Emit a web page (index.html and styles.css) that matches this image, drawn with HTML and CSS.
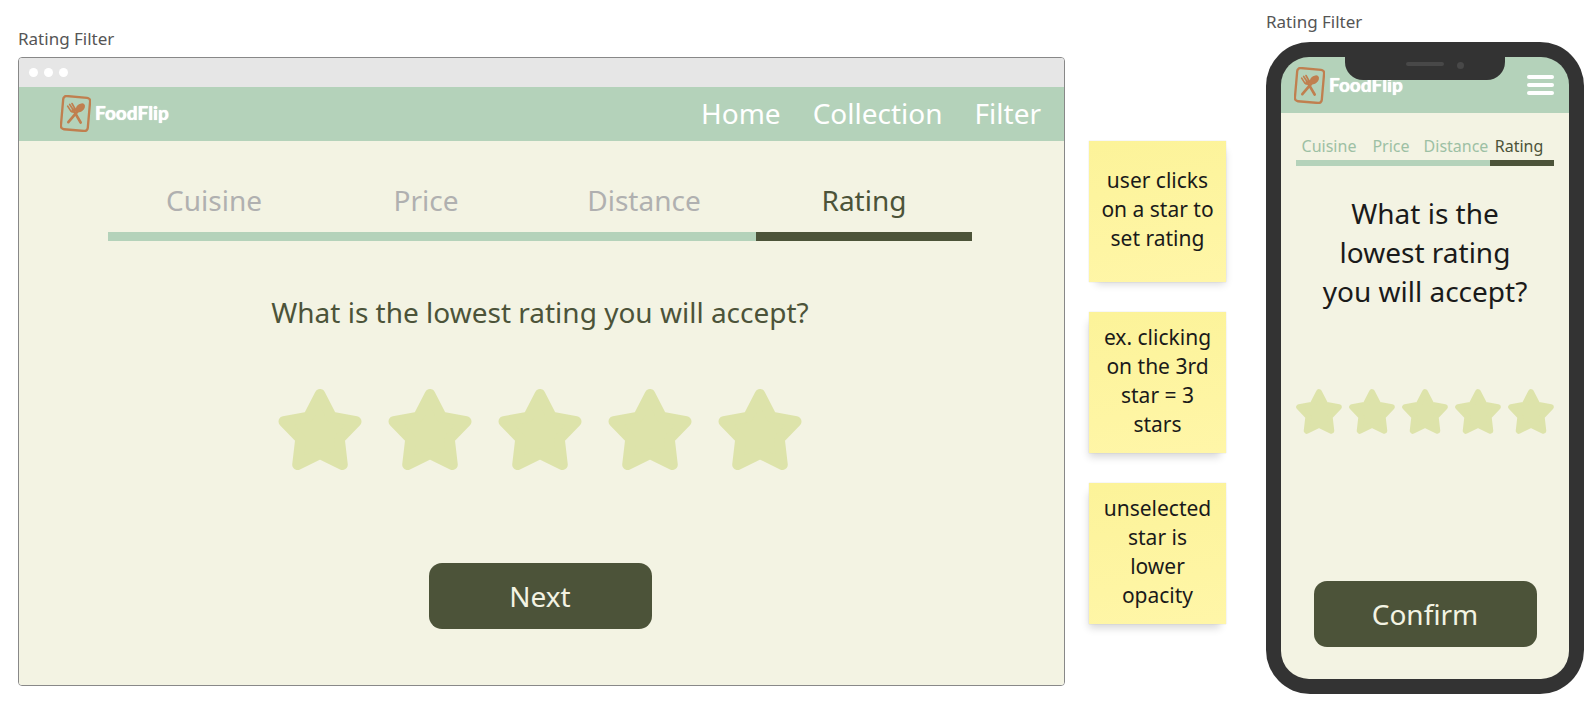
FILE: index.html
```html
<!DOCTYPE html>
<html lang="en">
<head>
<meta charset="utf-8">
<title>Rating Filter</title>
<link rel="stylesheet" href="styles.css">
</head>
<body>
<svg class="defs" aria-hidden="true">
  <symbol id="star" viewBox="0 0 250 242">
    <path d="M125 16 160 84 233 97 183 149 192 226 125 193 58 226 67 149 17 97 90 84Z" fill="currentColor" stroke="currentColor" stroke-width="32" stroke-linejoin="round"/>
  </symbol>
  <symbol id="logo" viewBox="0 0 93 110">
    <g fill="none" stroke="currentColor" stroke-linecap="round">
      <rect x="6" y="5" width="81" height="100" rx="10" stroke-width="7" transform="rotate(5 46 55)"/>
      <path d="M42 48 62 82" stroke-width="8"/>
      <path d="M25 81 54 47" stroke-width="8"/>
      <path d="M23 33 32 47Q38 53 44 47Q48 43 44 39L36 25M29 28 39 43" stroke-width="5"/>
    </g>
    <path d="M34 44 44 38 48 45Q46 52 38 52Z" fill="currentColor"/>
    <ellipse cx="61" cy="38" rx="16" ry="11" transform="rotate(-42 61 38)" fill="currentColor"/>
  </symbol>
</svg>

<main class="board">
  <section class="desktop">
    <h2 class="frame-label">Rating Filter</h2>
    <div class="browser">
      <div class="browser-bar"><i></i><i></i><i></i></div>
      <header class="site-header">
        <a class="brand" href="#"><svg class="brand-icon" aria-hidden="true"><use href="#logo"/></svg>FoodFlip</a>
        <nav class="site-nav"><a href="#">Home</a><a href="#">Collection</a><a href="#">Filter</a></nav>
      </header>
      <div class="page">
        <nav class="steps">
          <a href="#">Cuisine</a><a href="#">Price</a><a href="#">Distance</a><a href="#" class="current" aria-current="step">Rating</a>
        </nav>
        <div class="track"></div>
        <h1 class="question">What is the lowest rating you will accept?</h1>
        <div class="stars">
          <button aria-label="1 star"><svg><use href="#star"/></svg></button>
          <button aria-label="2 stars"><svg><use href="#star"/></svg></button>
          <button aria-label="3 stars"><svg><use href="#star"/></svg></button>
          <button aria-label="4 stars"><svg><use href="#star"/></svg></button>
          <button aria-label="5 stars"><svg><use href="#star"/></svg></button>
        </div>
        <button class="action">Next</button>
      </div>
    </div>
  </section>

  <aside class="notes">
    <p class="note right">user clicks on a star to set rating</p>
    <p class="note">ex. clicking on the 3rd star = 3 stars</p>
    <p class="note">unselected star is lower opacity</p>
  </aside>

  <section class="mobile">
    <h2 class="frame-label">Rating Filter</h2>
    <div class="phone">
      <div class="notch"><i class="speaker"></i><i class="camera"></i></div>
      <div class="screen">
        <header class="app-header">
          <a class="brand" href="#"><svg class="brand-icon" aria-hidden="true"><use href="#logo"/></svg>FoodFlip</a>
          <button class="menu" aria-label="Menu"><i></i><i></i><i></i></button>
        </header>
        <div class="page">
          <nav class="steps">
            <a href="#">Cuisine</a><a href="#">Price</a><a href="#">Distance</a><a href="#" class="current" aria-current="step">Rating</a>
          </nav>
          <div class="track"></div>
          <h1 class="question">What is the lowest rating you will accept?</h1>
          <div class="stars">
            <button aria-label="1 star"><svg><use href="#star"/></svg></button>
            <button aria-label="2 stars"><svg><use href="#star"/></svg></button>
            <button aria-label="3 stars"><svg><use href="#star"/></svg></button>
            <button aria-label="4 stars"><svg><use href="#star"/></svg></button>
            <button aria-label="5 stars"><svg><use href="#star"/></svg></button>
          </div>
          <button class="action">Confirm</button>
        </div>
      </div>
    </div>
  </section>
</main>
</body>
</html>
```
FILE: styles.css
```css
:root {
  --mint: #b4d2ba;
  --cream: #f3f3e3;
  --olive: #4c5339;
  --star: #dde3aa;
}

* { box-sizing: border-box; }

body {
  margin: 0;
  background: #fff;
  color: #1a1a1a;
  font-family: "Noto Sans", sans-serif;
}

h1, h2, p { margin: 0; font-weight: 400; }
a { color: inherit; text-decoration: none; }

button {
  border: 0;
  padding: 0;
  background: none;
  color: inherit;
  font: inherit;
  cursor: pointer;
}

.defs { position: absolute; width: 0; height: 0; }

.board {
  display: flex;
  align-items: flex-start;
  padding: 0 8px 0 18px;
}

.frame-label {
  color: #555;
  font-size: 17px;
  line-height: 24px;
}

.page {
  display: flex;
  flex-direction: column;
  align-items: center;
  background: var(--cream);
}

.steps, .track { width: 100%; }
.steps { display: grid; text-align: center; }
.steps .current { color: var(--olive); }

.track {
  display: flex;
  justify-content: flex-end;
  background: var(--mint);
}
.track::after {
  content: "";
  width: 25%;
  background: var(--olive);
}

.question { text-align: center; font-size: 28px; }

.stars { display: flex; color: var(--star); }
.stars svg { display: block; width: 100%; height: 100%; }

.action {
  width: 223px;
  height: 66px;
  border-radius: 13px;
  background: var(--olive);
  color: var(--cream);
  font-size: 28px;
}

.brand {
  display: flex;
  align-items: center;
  gap: 4px;
  color: #fff;
  font: 900 19px/24px Lato, sans-serif;
  text-shadow: 0 0 1px #fff;
}
.brand-icon { width: 31px; height: 37px; color: #c07f4f; }

/* Desktop frame */
.desktop { flex: 1; padding-top: 27px; }

.browser {
  margin-top: 6px;
  border: 1px solid #888;
  border-radius: 4px;
  overflow: hidden;
}

.browser-bar {
  display: flex;
  align-items: center;
  gap: 6px;
  height: 29px;
  padding-left: 10px;
  background: #e6e6e6;
}
.browser-bar i {
  width: 9px;
  height: 9px;
  border-radius: 50%;
  background: #fff;
}

.site-header {
  display: flex;
  align-items: center;
  justify-content: space-between;
  height: 54px;
  padding: 0 23px 2px 41px;
  background: var(--mint);
}
.site-nav {
  display: flex;
  gap: 32px;
  color: #fff;
  font-size: 28px;
  line-height: 38px;
}

.desktop .page { padding: 40px 92px 56px 89px; }
.desktop .steps {
  grid-template-columns: 212fr 212fr 224fr 216fr;
  color: #b0b0b0;
  font-size: 28px;
  line-height: 38px;
}
.desktop .track { height: 9px; margin-top: 13px; }
.desktop .question { margin: 52px 0 57px; color: var(--olive); line-height: 39px; }
.desktop .stars { gap: 26px; margin-bottom: 93px; }
.desktop .stars button { width: 84px; height: 81px; }

/* Sticky notes */
.notes { width: 137px; margin: 141px 40px 0 24px; }

.note {
  display: flex;
  align-items: center;
  justify-content: center;
  min-height: 141px;
  margin-bottom: 30px;
  padding: 8px 10px 12px;
  background: linear-gradient(170deg, #fcf399, #fff6a8);
  box-shadow: -3px 7px 8px -3px rgba(0, 0, 0, 0.16), 0 0 1px rgba(0, 0, 0, 0.2);
  font-size: 21px;
  line-height: 29px;
  text-align: center;
}
.note.right {
  box-shadow: 3px 6px 8px -4px rgba(0, 0, 0, 0.16), 0 0 1px rgba(0, 0, 0, 0.2);
}

/* Phone frame */
.mobile { width: 318px; padding-top: 10px; }

.phone {
  position: relative;
  margin-top: 8px;
  padding: 15px;
  border-radius: 44px;
  background: #333;
}
.screen { border-radius: 28px; overflow: hidden; }

.notch {
  position: absolute;
  top: 14px;
  left: 50%;
  display: flex;
  justify-content: center;
  gap: 13px;
  width: 160px;
  height: 24px;
  margin-left: -80px;
  padding: 6px 0 0 20px;
  border-radius: 0 0 18px 18px;
  background: #333;
}
.notch i { background: #484848; }
.speaker { width: 38px; height: 4px; border-radius: 2px; }
.camera { width: 7px; height: 7px; border-radius: 50%; }

.app-header {
  display: flex;
  align-items: center;
  justify-content: space-between;
  height: 56px;
  padding: 0 15px 0 13px;
  background: var(--mint);
}
.menu { display: grid; gap: 4px; width: 27px; }
.menu i { height: 4px; border-radius: 2px; background: #fff; }

.mobile .page { padding: 22px 15px 32px; }
.mobile .steps {
  grid-template-columns: 66fr 58fr 72fr 54fr;
  padding-right: 8px;
  color: #9dc0a4;
  font-size: 16px;
  line-height: 22px;
}
.mobile .track { height: 6px; margin-top: 3px; }
.mobile .question {
  margin: 28px 0 78px;
  padding: 0 20px;
  line-height: 39px;
}
.mobile .stars { gap: 7px; margin-bottom: 147px; }
.mobile .stars button { width: 46px; height: 45px; }
```
